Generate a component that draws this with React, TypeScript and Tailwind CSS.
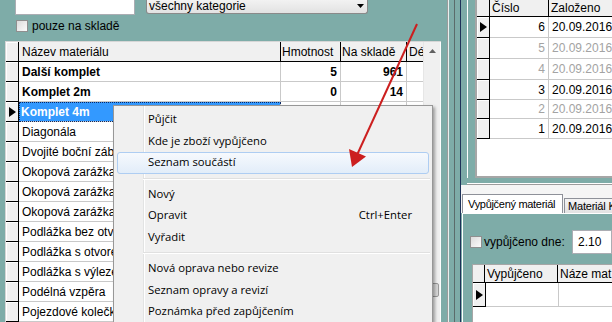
import React from "react";

type Row = { name: string; bold?: boolean; selected?: boolean; weight?: string; stock?: string };

const leftRows: Row[] = [
  { name: "Další komplet", bold: true, weight: "5", stock: "961" },
  { name: "Komplet 2m", bold: true, weight: "0", stock: "14" },
  { name: "Komplet 4m", bold: true, selected: true, weight: "0", stock: "6" },
  { name: "Diagonála" },
  { name: "Dvojité boční zábradlí" },
  { name: "Okopová zarážka 1m" },
  { name: "Okopová zarážka 2m" },
  { name: "Okopová zarážka 3m" },
  { name: "Podlážka bez otvoru" },
  { name: "Podlážka s otvorem" },
  { name: "Podlážka s výlezem" },
  { name: "Podélná vzpěra" },
  { name: "Pojezdové kolečko" },
];

// čísla výpůjček v pravé tabulce (šedé = uzavřené)
const loans = [
  { no: "6", dim: false, h: "h-[21px]", current: true },
  { no: "5", dim: true, h: "h-[21px]" },
  { no: "4", dim: true, h: "h-[21px]" },
  { no: "3", dim: false, h: "h-[20px]" },
  { no: "2", dim: true, h: "h-[19px]" },
  { no: "1", dim: false, h: "h-[20px]" },
];

type MenuEntry = { label?: string; shortcut?: string; hot?: boolean; sep?: boolean };

const menu: MenuEntry[] = [
  { label: "Půjčit" },
  { label: "Kde je zboží vypůjčeno" },
  { label: "Seznam součástí", hot: true },
  { sep: true },
  { label: "Nový" },
  { label: "Opravit", shortcut: "Ctrl+Enter" },
  { label: "Vyřadit" },
  { sep: true },
  { label: "Nová oprava nebo revize" },
  { label: "Seznam opravy a revizí" },
  { label: "Poznámka před zapůjčením" },
];

function Pointer() {
  return (
    <svg width="7" height="10" viewBox="0 0 7 10">
      <polygon points="0,0 7,5 0,10" fill="#000" />
    </svg>
  );
}

function RowHead({ current, className = "" }: { current?: boolean; className?: string }) {
  return (
    <div
      className={`w-[13px] shrink-0 bg-[#f0f0f0] border-r border-b border-black shadow-[inset_1px_1px_0_#fff] flex items-center justify-center ${className}`}
    >
      {current && <Pointer />}
    </div>
  );
}

function Checkbox() {
  return (
    <div className="w-[12px] h-[12px] shrink-0 border border-[#8f8f8f] bg-gradient-to-br from-[#dcdcdc] to-[#fbfbfb]" />
  );
}

export default function App() {
  return (
    <div
      className="relative w-[612px] h-[322px] overflow-hidden bg-[#7eaca8] flex text-[12px] text-black"
      style={{ fontFamily: '"Liberation Sans", Arial, sans-serif' }}
    >
      {/* levá část: filtr + seznam materiálu */}
      <div className="w-[441px] shrink-0 flex flex-col">
        <div className="h-[15px] flex items-start">
          <div className="ml-[15px] w-[120px] h-[15px] bg-white border border-t-0 border-[#abadb3]" />
          <div className="ml-[11px] w-[222px] h-[14px] border border-t-0 border-[#8a8a8a] rounded-b-[3px] bg-gradient-to-b from-[#f2f2f2] to-[#e2e2e2] flex items-center justify-between pl-[2px] pr-[3px]">
            <span className="leading-[12px] -mt-[2px]">všechny kategorie</span>
            <svg width="7" height="4" viewBox="0 0 7 4" className="-mt-[2px]">
              <polygon points="0,0 7,0 3.5,4" fill="#000" />
            </svg>
          </div>
        </div>

        <div className="mt-[5px] h-[12px] flex items-center">
          <div className="ml-[16px]">
            <Checkbox />
          </div>
          <span className="ml-[4px]">pouze na skladě</span>
        </div>

        <div className="mt-[9px] ml-[5px] flex-1 flex border-l border-t border-[#d6d6d6] bg-white">
          <div className="w-[417px] shrink-0 flex flex-col">
            <div className="h-[20px] flex bg-[#f0f0f0] border-b border-black shrink-0">
              <div className="w-[13px] shrink-0 border-r border-black shadow-[inset_1px_1px_0_#fff]" />
              <div className="w-[262px] shrink-0 border-r border-black pl-[3px] flex items-center">Název materiálu</div>
              <div className="w-[60px] shrink-0 border-r border-black pl-[1px] flex items-center">Hmotnost</div>
              <div className="w-[66px] shrink-0 border-r border-black pl-[1px] flex items-center">Na skladě</div>
              <div className="w-[16px] shrink-0 pl-[2px] flex items-center overflow-hidden whitespace-nowrap">Dé</div>
            </div>
            {leftRows.map((r) => (
              <div key={r.name} className="h-[20px] flex shrink-0">
                <RowHead current={r.selected} />
                <div
                  className={`w-[262px] shrink-0 border-b border-r border-[#c9c9c9] flex items-center whitespace-nowrap overflow-hidden ${
                    r.selected
                      ? "bg-[#3399ff] text-white font-bold pl-[2px] outline outline-1 outline-dotted outline-[#0b2a66] -outline-offset-1"
                      : "pl-[3px]"
                  } ${r.bold && !r.selected ? "font-bold" : ""}`}
                >
                  {r.name}
                </div>
                <div className="w-[60px] shrink-0 border-b border-r border-[#c9c9c9] flex items-center justify-end pr-[3px] font-bold">
                  {r.weight}
                </div>
                <div className="w-[66px] shrink-0 border-b border-r border-[#c9c9c9] flex items-center justify-end pr-[3px] font-bold">
                  {r.stock}
                </div>
                <div className="w-[16px] shrink-0 border-b border-[#c9c9c9]" />
              </div>
            ))}
          </div>
          {/* svislý posuvník */}
          <div className="w-[17px] shrink-0 bg-[#f0f0f0] border-l border-[#e6e6e6] flex flex-col">
            <div className="h-[17px] flex items-center justify-center">
              <svg width="7" height="4" viewBox="0 0 7 4">
                <polygon points="3.5,0 7,4 0,4" fill="#606060" />
              </svg>
            </div>
            <div className="h-[224px]" />
            <div className="h-[14px] mx-[1px] rounded-[2px] border border-[#9a9a9a] bg-gradient-to-r from-[#e9e9e9] to-[#d6d6d6]" />
          </div>
          <div className="w-[1px] shrink-0 bg-white" />
        </div>
      </div>

      {/* dělicí lišta */}
      <div className="flex shrink-0">
        <div className="w-[6px]" />
        <div className="w-[1px] bg-[#9c9c9c]" />
        <div className="w-[1px] bg-[#e8f0ef]" />
        <div className="w-[5px]" />
        <div className="w-[1px] bg-[#5b6b6a]" />
        <div className="w-[5px]" />
        <div className="w-[1px] bg-[#1d3158]" />
      </div>

      {/* pravá část */}
      <div className="w-[151px] shrink-0 flex flex-col">
        <div className="h-[178px] flex shrink-0">
          <div className="w-[6px] shrink-0" />
          <div className="w-[1px] shrink-0 bg-white" />
          <div className="w-[7px] shrink-0" />
          <div className="flex-1 flex flex-col bg-white border-l-2 border-b-2 border-[#a6a6a6] overflow-hidden">
            <div className="h-[17px] flex bg-[#f0f0f0] border-b border-black shrink-0">
              <div className="w-[13px] shrink-0 border-r border-black" />
              <div className="w-[59px] shrink-0 border-r border-black pl-[2px] flex items-center">Číslo</div>
              <div className="flex-1 pl-[2px] flex items-center whitespace-nowrap">Založeno</div>
            </div>
            {loans.map((l) => (
              <div key={l.no} className={`${l.h} flex shrink-0 ${l.dim ? "text-[#a3a3a3]" : ""}`}>
                <RowHead current={l.current} />
                <div className="w-[59px] shrink-0 border-b border-r border-[#c9c9c9] flex items-center justify-end pr-[3px]">
                  {l.no}
                </div>
                <div className="flex-1 border-b border-[#c9c9c9] flex items-center pl-[3px] whitespace-nowrap">
                  20.09.2016
                </div>
              </div>
            ))}
          </div>
        </div>
        <div className="h-[5px] shrink-0" />
        <div className="h-[1px] shrink-0 ml-[6px] bg-white" />
        <div className="h-[1px] shrink-0 ml-[6px] bg-[#9c9c9c]" />

        {/* záložky */}
        <div className="h-[28px] shrink-0 bg-[#f5f5f5] flex items-end pl-[1px] text-[11px]">
          <div className="w-[101px] h-[19px] shrink-0 bg-white border border-b-0 border-[#8e9199] flex items-center pl-[5px] whitespace-nowrap tracking-[-0.3px]">
            Vypůjčený materiál
          </div>
          <div className="ml-[1px] w-[60px] h-[15px] shrink-0 border border-b-0 border-[#8e9199] bg-gradient-to-b from-[#f4f4f4] to-[#e2e2e2] flex items-center pl-[3px] whitespace-nowrap tracking-[-0.2px]">
            Materiál K
          </div>
        </div>

        <div className="flex-1 ml-[1px] border-l border-t border-white flex flex-col">
          <div className="mt-[16px] h-[24px] flex items-center shrink-0">
            <div className="ml-[7px]">
              <Checkbox />
            </div>
            <span className="ml-[1px] w-[98px] pl-[1px] whitespace-nowrap">vypůjčeno dne:</span>
            <div className="w-[40px] h-[24px] shrink-0 bg-white border border-[#abadb3] flex items-center pl-[5px]">2.10</div>
          </div>
          <div className="mt-[10px] ml-[9px] flex-1 flex flex-col bg-white border-l border-t border-[#a6a6a6]">
            <div className="h-[18px] flex bg-[#f0f0f0] border-b border-black shrink-0">
              <div className="w-[12px] shrink-0 border-r border-black" />
              <div className="w-[73px] shrink-0 border-r border-black pl-[2px] flex items-center">Vypůjčeno</div>
              <div className="flex-1 pl-[2px] flex items-center whitespace-nowrap overflow-hidden">Náze mat</div>
            </div>
            <div className="h-[24px] flex shrink-0">
              <RowHead current className="w-[12px]" />
              <div className="w-[73px] shrink-0 border-b border-r border-[#c9c9c9]" />
              <div className="flex-1 border-b border-[#c9c9c9]" />
            </div>
          </div>
        </div>
      </div>

      {/* kontextové menu */}
      <div
        className="absolute left-[113px] top-[105px] w-[320px] h-[230px] bg-[#f0f0f0] border border-[#979797] shadow-[2px_2px_3px_rgba(0,0,0,0.35)] pt-[3px] text-[11.3px]"
        style={{ fontFamily: '"Open Sans", "Noto Sans", sans-serif' }}
      >
        <div className="absolute left-[29px] top-0 bottom-0 w-[1px] bg-[#e2e3e3]" />
        <div className="absolute left-[30px] top-0 bottom-0 w-[1px] bg-white" />
        {menu.map((m, i) =>
          m.sep ? (
            <div key={i} className="relative h-[10px] flex items-center ml-[29px] mr-[2px]">
              <div className="w-full h-[2px] border-t border-[#e0e0e0] border-b border-b-white" />
            </div>
          ) : (
            <div
              key={i}
              className={`relative h-[21.5px] mx-[3px] border rounded-[3px] flex items-center justify-between pl-[30px] pr-[16px] whitespace-nowrap ${
                m.hot ? "border-[#aecdf2] bg-gradient-to-b from-[#f6f9fd] to-[#e2edf9]" : "border-transparent"
              }`}
            >
              <span>{m.label}</span>
              {m.shortcut && <span>{m.shortcut}</span>}
            </div>
          )
        )}
      </div>

      {/* červená šipka */}
      <svg className="absolute inset-0 pointer-events-none" width="612" height="322" viewBox="0 0 612 322">
        <line x1="417" y1="24" x2="357" y2="155" stroke="#cc1f1f" strokeWidth="2" />
        <polygon points="352,167 349,149 366,156.5" fill="#cc1f1f" />
      </svg>
    </div>
  );
}
